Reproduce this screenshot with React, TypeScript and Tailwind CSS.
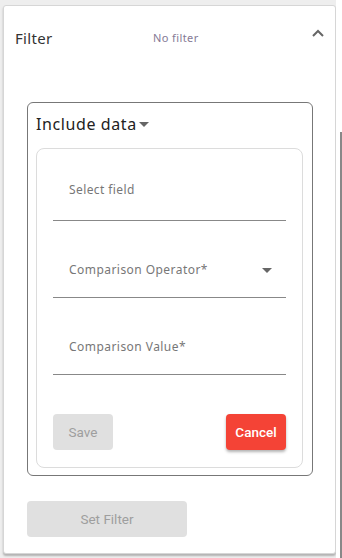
import React from "react";

const poppins = { fontFamily: '"Noto Sans", Inter, sans-serif' };
const roboto = { fontFamily: 'Roboto, "Liberation Sans", sans-serif' };

function Caret({ className = "" }: { className?: string }) {
  return (
    <svg width="10" height="5" viewBox="0 0 10 5" className={className}>
      <path d="M0 0 L10 0 L5 5 Z" fill="#666" />
    </svg>
  );
}

export default function App() {
  return (
    <div className="flex w-[342px] h-[558px] overflow-hidden bg-white" style={poppins}>
      <div className="w-[336px] h-full bg-[#eeeeee] pt-[5px] pl-[3px]">
        <div className="w-[333px] h-[549px] bg-white border border-[#d6d6d6] rounded-[3px] shadow-[0_2px_2px_rgba(0,0,0,0.25)] flex flex-col">
          <div className="h-[66px] flex items-center pl-[11px] pr-[10px] pb-[2px]">
            <span className="text-[15px] text-[#333] w-[138px] tracking-[0.3px]">Filter</span>
            <span className="text-[11px] text-[#857a95] tracking-[0.4px]">No filter</span>
            <svg width="14" height="9" viewBox="0 0 14 9" className="ml-auto mb-[9px]">
              <path d="M2 7 L7 2 L12 7" stroke="#666" strokeWidth="2" fill="none" />
            </svg>
          </div>
          <div className="mt-[30px] pl-[23px]">
            <div className="w-[286px] h-[374px] border border-[#777] rounded-[6px] flex flex-col">
              <div className="h-[45px] flex items-center pl-[8px] pb-[3px]">
                <span className="text-[16px] text-[#222] tracking-[0.6px]">Include data</span>
                <Caret className="ml-[2px]" />
              </div>
              <div className="ml-[8px] w-[267px] h-[320px] border border-[#dcdcdc] rounded-[8px] px-[16px] flex flex-col">
                <div className="h-[72px] flex flex-col justify-end">
                  <div className="pl-[16px] pb-[22px] text-[12px] leading-[16px] text-[#777] tracking-[0.4px]">Select field</div>
                  <div className="border-b border-[#888]" />
                </div>
                <div className="h-[77px] flex flex-col justify-end">
                  <div className="pl-[16px] pr-[14px] pb-[19px] text-[12px] leading-[16px] text-[#777] tracking-[0.45px] flex items-center">
                    <span>Comparison Operator*</span>
                    <Caret className="ml-auto" />
                  </div>
                  <div className="border-b border-[#888]" />
                </div>
                <div className="h-[77px] flex flex-col justify-end">
                  <div className="pl-[16px] pb-[19px] text-[12px] leading-[16px] text-[#777] tracking-[0.45px]">Comparison Value*</div>
                  <div className="border-b border-[#888]" />
                </div>
                <div className="mt-[39px] flex justify-between" style={roboto}>
                  <button className="w-[60px] h-[36px] rounded-[4px] bg-[#e0e0e0] text-[13.5px] text-[#9e9e9e]">Save</button>
                  <button className="w-[60px] h-[36px] rounded-[4px] bg-[#f44336] text-[13.5px] text-white font-medium shadow-[0_2px_3px_rgba(0,0,0,0.3)]">Cancel</button>
                </div>
              </div>
            </div>
            <button className="mt-[25px] w-[160px] h-[36px] rounded-[4px] bg-[#e0e0e0] text-[13.5px] text-[#9e9e9e]" style={roboto}>Set Filter</button>
          </div>
        </div>
      </div>
      <div className="w-[6px] h-full bg-white flex">
        <div className="ml-auto mt-[132px] w-[2px] h-full bg-[#888]" />
      </div>
    </div>
  );
}
